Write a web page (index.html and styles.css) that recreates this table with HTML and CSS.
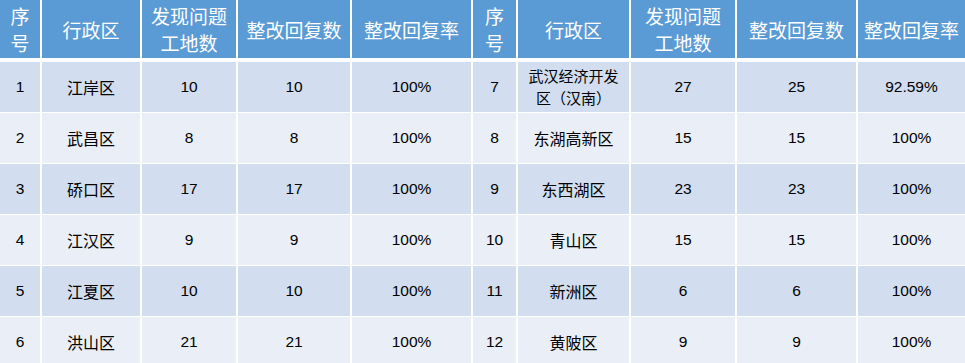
FILE: index.html
```html
<!DOCTYPE html>
<html lang="zh-CN">
<head>
<meta charset="utf-8">
<title>整改回复统计</title>
<link rel="stylesheet" href="styles.css">
</head>
<body>
<table class="tbl">
  <colgroup>
    <col class="c1"><col class="c2"><col class="c3"><col class="c4"><col class="c5">
    <col class="c6"><col class="c7"><col class="c8"><col class="c9"><col class="c10">
  </colgroup>
  <thead>
    <tr>
      <th>序<br>号</th><th>行政区</th><th>发现问题<br>工地数</th><th>整改回复数</th><th>整改回复率</th>
      <th>序<br>号</th><th>行政区</th><th>发现问题<br>工地数</th><th>整改回复数</th><th>整改回复率</th>
    </tr>
  </thead>
  <tbody>
    <tr class="odd">
      <td>1</td><td class="d">江岸区</td><td>10</td><td>10</td><td>100%</td>
      <td>7</td><td class="d two">武汉经济开发<br>区（汉南）</td><td>27</td><td>25</td><td>92.59%</td>
    </tr>
    <tr class="even">
      <td>2</td><td class="d">武昌区</td><td>8</td><td>8</td><td>100%</td>
      <td>8</td><td class="d">东湖高新区</td><td>15</td><td>15</td><td>100%</td>
    </tr>
    <tr class="odd">
      <td>3</td><td class="d">硚口区</td><td>17</td><td>17</td><td>100%</td>
      <td>9</td><td class="d">东西湖区</td><td>23</td><td>23</td><td>100%</td>
    </tr>
    <tr class="even">
      <td>4</td><td class="d">江汉区</td><td>9</td><td>9</td><td>100%</td>
      <td>10</td><td class="d">青山区</td><td>15</td><td>15</td><td>100%</td>
    </tr>
    <tr class="odd">
      <td>5</td><td class="d">江夏区</td><td>10</td><td>10</td><td>100%</td>
      <td>11</td><td class="d">新洲区</td><td>6</td><td>6</td><td>100%</td>
    </tr>
    <tr class="even">
      <td>6</td><td class="d">洪山区</td><td>21</td><td>21</td><td>100%</td>
      <td>12</td><td class="d">黄陂区</td><td>9</td><td>9</td><td>100%</td>
    </tr>
  </tbody>
</table>
</body>
</html>
```

FILE: styles.css
```css
html, body {
  margin: 0;
  padding: 0;
  background: #ffffff;
}

.tbl {
  width: 965px;
  table-layout: fixed;
  border-collapse: collapse;
  border-spacing: 0;
  font-family: "Liberation Sans", "Noto Sans CJK SC", sans-serif;
}

.c1 { width: 41px; }
.c2 { width: 100px; }
.c3 { width: 96px; }
.c4 { width: 114px; }
.c5 { width: 121px; }
.c6 { width: 45px; }
.c7 { width: 113px; }
.c8 { width: 106px; }
.c9 { width: 121px; }
.c10 { width: 108px; }

.tbl th,
.tbl td {
  padding: 0;
  text-align: center;
  vertical-align: middle;
  border-right: 2px solid #ffffff;
}

.tbl th:last-child,
.tbl td:last-child {
  border-right: none;
}

.tbl th {
  background: #5b9bd5;
  color: #ffffff;
  font-family: "Noto Sans CJK SC", sans-serif;
  font-weight: normal;
  font-size: 19px;
  line-height: 27px;
  height: 58px;
  border-bottom: 4px solid #ffffff;
}

.tbl td {
  color: #000000;
  font-size: 15.5px;
  line-height: 22px;
  height: 50px;
  border-bottom: 1px solid #ffffff;
}

.tbl td.d {
  font-family: "Noto Sans CJK SC", sans-serif;
  font-size: 16px;
}

.tbl td.two {
  font-size: 15px;
}

.tbl tr.odd td { background: #d2deef; }
.tbl tr.even td { background: #eaeff7; }
```
